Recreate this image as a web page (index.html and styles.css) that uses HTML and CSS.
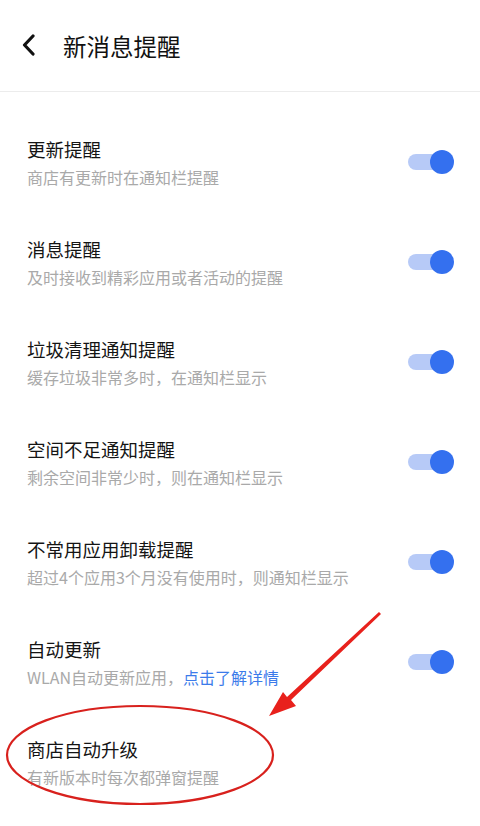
FILE: index.html
```html
<!DOCTYPE html>
<html lang="zh-CN">
<head>
<meta charset="utf-8">
<title>新消息提醒</title>
<link rel="stylesheet" href="styles.css">
</head>
<body>
<div class="page">
  <header class="topbar">
    <svg class="back" width="16" height="22" viewBox="0 0 16 22"><path d="M12 2 L3.5 11 L12 20" fill="none" stroke="#111" stroke-width="3.2" stroke-linecap="round" stroke-linejoin="round"/></svg>
    <h1 class="title">新消息提醒</h1>
  </header>
  <ul class="list">
    <li class="row">
      <div class="text"><div class="name">更新提醒</div><div class="desc">商店有更新时在通知栏提醒</div></div>
      <span class="switch"><span class="knob"></span></span>
    </li>
    <li class="row">
      <div class="text"><div class="name">消息提醒</div><div class="desc">及时接收到精彩应用或者活动的提醒</div></div>
      <span class="switch"><span class="knob"></span></span>
    </li>
    <li class="row">
      <div class="text"><div class="name">垃圾清理通知提醒</div><div class="desc">缓存垃圾非常多时，在通知栏显示</div></div>
      <span class="switch"><span class="knob"></span></span>
    </li>
    <li class="row">
      <div class="text"><div class="name">空间不足通知提醒</div><div class="desc">剩余空间非常少时，则在通知栏显示</div></div>
      <span class="switch"><span class="knob"></span></span>
    </li>
    <li class="row">
      <div class="text"><div class="name">不常用应用卸载提醒</div><div class="desc">超过4个应用3个月没有使用时，则通知栏显示</div></div>
      <span class="switch"><span class="knob"></span></span>
    </li>
    <li class="row">
      <div class="text"><div class="name">自动更新</div><div class="desc">WLAN自动更新应用，<span class="link">点击了解详情</span></div></div>
      <span class="switch"><span class="knob"></span></span>
    </li>
    <li class="row">
      <div class="text"><div class="name">商店自动升级</div><div class="desc">有新版本时每次都弹窗提醒</div></div>
    </li>
  </ul>
  <svg class="annot" width="480" height="826" viewBox="0 0 480 826">
    <ellipse cx="140" cy="755" rx="133" ry="49" fill="none" stroke="#d8211d" stroke-width="2.2"/>
    <path d="M381 614 L291 700 L296 706 L269 716 L283 692 L287 697 L379 612 Z" fill="#e8211c"/>
  </svg>
</div>
</body>
</html>
```
FILE: styles.css
```css
* { box-sizing: border-box; }
html, body { margin: 0; padding: 0; background: #fff; }
body {
  font-family: "Noto Sans CJK SC", "Noto Sans", sans-serif;
  width: 480px;
  height: 826px;
  overflow: hidden;
}
.page { position: relative; width: 480px; height: 826px; }
.topbar {
  height: 92px;
  display: flex;
  align-items: center;
  padding-left: 21px;
  border-bottom: 1.5px solid #ececec;
}
.back { flex: none; margin-top: -2px; }
.title {
  margin: 0 0 0 26px;
  font-size: 23.5px;
  font-weight: 400;
  color: #111;
  line-height: 30px;
}
.list { list-style: none; margin: 0; padding: 20px 0 0; }
.row {
  height: 100px;
  display: flex;
  align-items: center;
  justify-content: space-between;
  padding: 0 26px 0 27px;
}
.text { display: flex; flex-direction: column; gap: 4px; }
.name { font-size: 18.5px; line-height: 26px; color: #141414; }
.desc { font-size: 16px; line-height: 22px; color: #a9a9a9; }
.link { color: #3b7bea; }
.switch {
  position: relative;
  width: 46px;
  height: 24px;
  display: flex;
  align-items: center;
  flex: none;
}
.switch::before {
  content: "";
  width: 38px;
  height: 16px;
  border-radius: 8px;
  background: #b7caf7;
}
.knob {
  position: absolute;
  right: 0;
  top: 0;
  width: 24px;
  height: 24px;
  border-radius: 50%;
  background: #3470ef;
}
.annot { position: absolute; left: 0; top: 0; pointer-events: none; }
```
